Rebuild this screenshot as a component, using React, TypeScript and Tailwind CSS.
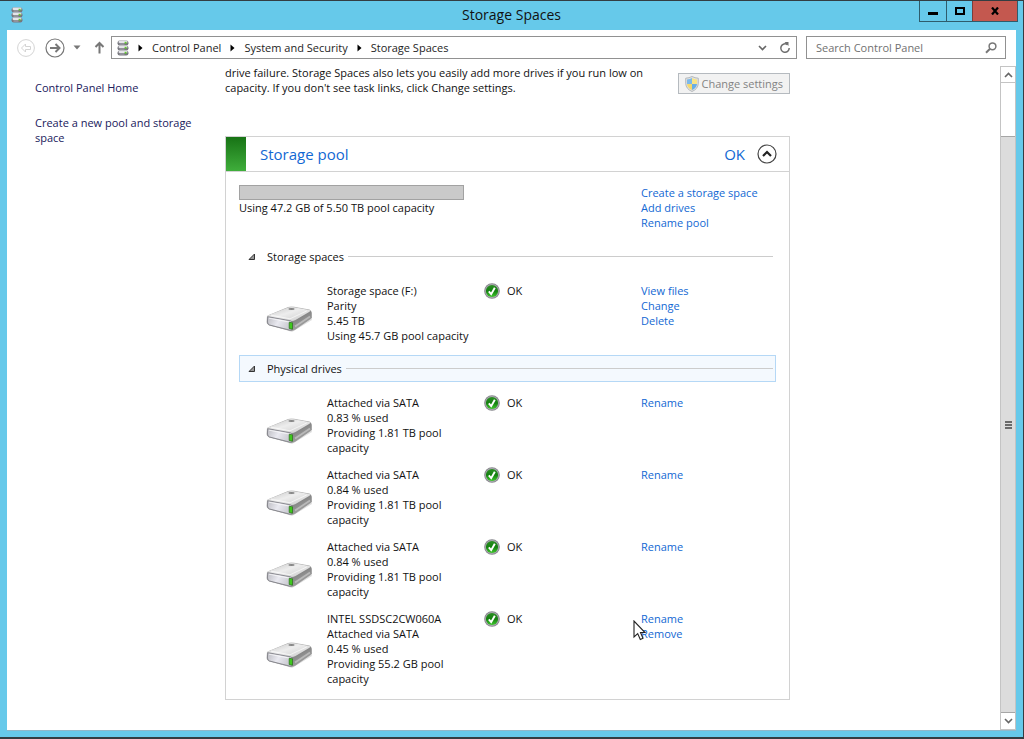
import type { ReactNode } from "react";

type Drive = { lines: string[]; actions: string[] };

const spaces: Drive[] = [
  {
    lines: ["Storage space (F:)", "Parity", "5.45 TB", "Using 45.7 GB pool capacity"],
    actions: ["View files", "Change", "Delete"],
  },
];

const drives: Drive[] = [
  { lines: ["Attached via SATA", "0.83 % used", "Providing 1.81 TB pool", "capacity"], actions: ["Rename"] },
  { lines: ["Attached via SATA", "0.84 % used", "Providing 1.81 TB pool", "capacity"], actions: ["Rename"] },
  { lines: ["Attached via SATA", "0.84 % used", "Providing 1.81 TB pool", "capacity"], actions: ["Rename"] },
  {
    lines: ["INTEL SSDSC2CW060A", "Attached via SATA", "0.45 % used", "Providing 55.2 GB pool", "capacity"],
    actions: ["Rename", "Remove"],
  },
];

function StackIcon() {
  return (
    <svg width="12" height="16" viewBox="0 0 12 16" aria-hidden="true" className="shrink-0">
      {[0, 5, 10].map((y) => (
        <g key={y}>
          <rect x="0.5" y={y + 0.5} width="11" height="5" rx="2.2" fill="#77777e" />
          <rect x="1.5" y={y + 0.6} width="9" height="2.4" rx="1.2" fill="#e4e4e8" />
          <rect x="2.5" y={y + 3.5} width="5" height="1" fill="#b0b0b8" />
          <rect x="7.6" y={y + 1.8} width="2" height="1.8" fill="#63c930" />
        </g>
      ))}
    </svg>
  );
}

function DriveIcon() {
  return (
    <svg width="48" height="38" viewBox="0 0 48 38" aria-hidden="true">
      <defs>
        <linearGradient id="top" x1="0" y1="0" x2="1" y2="1">
          <stop offset="0" stopColor="#c2c2c2" />
          <stop offset="0.45" stopColor="#ededed" />
          <stop offset="1" stopColor="#c8c8c8" />
        </linearGradient>
        <linearGradient id="front" x1="0" y1="0" x2="1" y2="0.3">
          <stop offset="0" stopColor="#bcbcc2" />
          <stop offset="0.5" stopColor="#e9e9f0" />
          <stop offset="1" stopColor="#c9c9d0" />
        </linearGradient>
        <linearGradient id="side" x1="0" y1="0" x2="1" y2="1">
          <stop offset="0" stopColor="#d2d2d2" />
          <stop offset="0.5" stopColor="#7c7c7c" />
          <stop offset="1" stopColor="#b5b5b5" />
        </linearGradient>
      </defs>
      <path d="M4 31 L26 38 L46 26 L45 23Z" fill="#000" opacity="0.12" />
      <path d="M1.5 22 L22 13.500 Q25 12.700 28 13.200 L43.500 16 Q45.500 17 45.500 19 V24 L29 35.500 Q26.500 37 23.500 36.300 L3 31 Q1 30.200 1 28Z" fill="url(#side)" stroke="#909090" strokeWidth="0.6" />
      <path d="M1.800 21.500 L22 13.500 Q25 12.700 28 13.200 L43.500 16 Q45 16.700 43.500 17.800 L29.500 26 Q27 27.400 24.500 26.900 L3 23Q1 22.300 1.800 21.500Z" fill="url(#top)" />
      <path d="M5 21.200 L24 24.800 L41 16.800" stroke="#fff" fill="none" strokeWidth="0.8" opacity="0.8" />
      <path d="M2.500 22.800 L24.500 26.800 Q26.800 27.400 26.700 29.500 L26.500 34.500 Q26.200 36.600 24 36.200 L3.600 31 Q1.500 30.300 1.500 28 V24.200 Q1.500 22.700 2.500 22.800Z" fill="url(#front)" stroke="#85858b" strokeWidth="0.9" />
      <path d="M3 24.200 L23 28" stroke="#fff" strokeWidth="1" opacity="0.7" />
      <path d="M29 32.500 L44 22.500" stroke="#fff" strokeWidth="1.800" opacity="0.35" />
      <path d="M23.200 28.300 L26.500 28.800 V35.200 L23.200 34.500Z" fill="#3fc81e" stroke="#286b19" strokeWidth="0.7" />
      <ellipse cx="25.500" cy="15" rx="3.200" ry="1" fill="#858585" />
    </svg>
  );
}

function OkIcon() {
  return (
    <svg width="16" height="16" viewBox="0 0 16 16" aria-hidden="true" className="shrink-0">
      <defs>
        <linearGradient id="ok" x1="0" y1="0" x2="0" y2="1">
          <stop offset="0" stopColor="#2c8f24" />
          <stop offset="0.5" stopColor="#148010" />
          <stop offset="1" stopColor="#3fc92c" />
        </linearGradient>
      </defs>
      <circle cx="8" cy="8" r="7.800" fill="#848489" />
      <circle cx="8" cy="8" r="7" fill="#a9a9af" />
      <circle cx="8" cy="8" r="6.100" fill="url(#ok)" />
      <path d="M4.800 8.300 L7.200 11.200 L10.800 4.800" fill="none" stroke="#fff" strokeWidth="1.900" />
    </svg>
  );
}

function ShieldIcon() {
  return (
    <svg width="14" height="16" viewBox="0 0 14 16" aria-hidden="true" className="shrink-0">
      <path d="M7 0.500 Q10 2 13.300 2.200 V7.500 Q13 13 7 15.500 Q1 13 0.700 7.500 V2.200 Q4 2 7 0.500Z" fill="#e1e1e1" stroke="#b0b4b8" strokeWidth="0.9" />
      <path d="M7 2 V8 H2 V3.400 Q5 3.200 7 2Z" fill="#7db9ea" />
      <path d="M7 2 V8 H12 V3.400 Q9 3.200 7 2Z" fill="#f9e486" />
      <path d="M7 8 V14 Q2.500 12 2 8Z" fill="#f5d96d" />
      <path d="M7 8 V14 Q11.500 12 12 8Z" fill="#6aaee6" />
    </svg>
  );
}

function Crumb({ children }: { children: ReactNode }) {
  return (
    <>
      <svg width="5" height="8" viewBox="0 0 5 8" aria-hidden="true">
        <path d="M0.500 0.500 L4.500 4 L0.500 7.500Z" fill="#000" />
      </svg>
      <a href="#" className="text-[#1e1e1e]">{children}</a>
    </>
  );
}

function SectionHeader({ title, active = false }: { title: string; active?: boolean }) {
  return (
    <button
      type="button"
      aria-expanded="true"
      className={
        active
          ? "flex h-[27px] w-full items-center border border-[#b5d8f6] bg-[#f4f9fe] pr-0.5 pl-2"
          : "flex h-[27px] w-full items-center border border-transparent pr-0.5 pl-2"
      }
    >
      <svg width="8" height="8" viewBox="0 0 8 8" aria-hidden="true">
        <path d="M6.500 1 V6.500 H1Z" fill="#999" stroke="#333" />
      </svg>
      <span className="ml-[11px]">{title}</span>
      <span className="ml-1 h-px flex-1 bg-[#cccccc]" />
    </button>
  );
}

function DriveRow({ drive }: { drive: Drive }) {
  return (
    <li className="grid grid-cols-[61px_157px_157px_1fr]">
      <div className="flex items-center">
        <DriveIcon />
      </div>
      <div className="whitespace-nowrap">
        {drive.lines.map((line) => (
          <p key={line}>{line}</p>
        ))}
      </div>
      <div className="flex h-[15px] items-center gap-[7px]">
        <OkIcon />
        OK
      </div>
      <div className="flex flex-col items-start text-[#1268d3]">
        {drive.actions.map((action) =>
          action === "Remove" ? (
            <span key={action} className="relative">
              <a href="#">{action}</a>
              <svg width="13" height="21" viewBox="0 0 13 21" aria-hidden="true" className="absolute -top-1.5 -left-2">
                <path d="M1 1 V17 L4.700 13.600 L7.300 19.500 L10 18.300 L7.500 12.500 H12Z" fill="#fff" stroke="#222" strokeWidth="1.100" />
              </svg>
            </span>
          ) : (
            <a key={action} href="#">{action}</a>
          ),
        )}
      </div>
    </li>
  );
}

function Chevron({ down = false }: { down?: boolean }) {
  return (
    <svg width="9" height="6" viewBox="0 0 9 6" aria-hidden="true">
      <path d={down ? "M1 1 L4.500 4.500 L8 1" : "M1 5 L4.500 1.500 L8 5"} fill="none" stroke="#666" strokeWidth="1.600" />
    </svg>
  );
}

export default function App() {
  return (
    <div className="flex min-h-screen flex-col border-t border-r border-b-2 border-[#333d42] bg-[#66c9ea] pr-[7px] pb-[6px] pl-[7px] font-['Open_Sans',sans-serif] text-[11px] leading-[15px] text-[#111111]">
      <header className="grid h-[29px] grid-cols-[1fr_auto_1fr] items-start">
        <div className="pt-[6px] pl-1">
          <StackIcon />
        </div>
        <h1 className="text-[14px] leading-7">Storage Spaces</h1>
        <div className="-mr-0.5 flex h-[21px] justify-self-end border border-t-0 border-[#2e5c6c]">
          <button type="button" aria-label="Minimize" className="flex w-[27px] items-end justify-center border-r border-[#2e5c6c] pb-[6px]">
            <span className="h-[3px] w-[10px] bg-black" />
          </button>
          <button type="button" aria-label="Maximize" className="flex w-[25px] items-center justify-center">
            <span className="h-2 w-[10px] border-2 border-black" />
          </button>
          <button type="button" aria-label="Close" className="flex w-[45px] items-center justify-center border-l border-[#7a3d3b] bg-[#c4584f]">
            <svg width="10" height="8" viewBox="0 0 10 8" aria-hidden="true">
              <path d="M2 0.500 L8 7.500 M8 0.500 L2 7.500" stroke="#000" strokeWidth="2.200" />
            </svg>
          </button>
        </div>
      </header>

      <div className="flex flex-1 flex-col border-b border-[#8fb9cb] bg-white">
        <nav className="flex h-[35px] items-center px-[10px]">
          <button type="button" aria-label="Back" disabled>
            <svg width="18" height="18" viewBox="0 0 18 18" fill="none" stroke="#d4d4d4" aria-hidden="true">
              <circle cx="9" cy="9" r="8.400" />
              <path d="M4.500 9 L8.500 5 V7.500 H13.500 V10.500 H8.500 V13Z" />
            </svg>
          </button>
          <button type="button" aria-label="Forward" className="ml-[10px]">
            <svg width="20" height="20" viewBox="0 0 20 20" fill="none" stroke="#777" aria-hidden="true">
              <circle cx="10" cy="10" r="9" strokeWidth="1.200" />
              <path d="M5 10 H14 M10.500 6 L14.500 10 L10.500 14" strokeWidth="2" />
            </svg>
          </button>
          <button type="button" aria-label="Recent locations" className="ml-2">
            <svg width="8" height="5" viewBox="0 0 8 5" aria-hidden="true">
              <path d="M0.500 0.500 H7.500 L4 4.500Z" fill="#777" />
            </svg>
          </button>
          <button type="button" aria-label="Up" className="ml-[13px]">
            <svg width="11" height="13" viewBox="0 0 11 13" fill="none" stroke="#777" strokeWidth="2" aria-hidden="true">
              <path d="M5.500 12.500 V2 M1.500 6 L5.500 2 L9.500 6" />
            </svg>
          </button>
          <div className="ml-[6px] flex h-[23px] flex-1 items-center border border-[#919191] px-[5px]">
            <StackIcon />
            <div className="ml-[9px] flex flex-1 items-center gap-[9px]">
              <Crumb>Control Panel</Crumb>
              <Crumb>System and Security</Crumb>
              <Crumb>Storage Spaces</Crumb>
            </div>
            <button type="button" aria-label="Previous locations">
              <Chevron down />
            </button>
            <button type="button" aria-label="Refresh" className="ml-3">
              <svg width="12" height="12" viewBox="0 0 12 12" aria-hidden="true">
                <path d="M8.500 2.700 A4.200 4.200 0 1 0 10.200 6" fill="none" stroke="#6e6e6e" strokeWidth="1.500" />
                <path d="M5.500 0 H9.500 V4Z" fill="#6e6e6e" />
              </svg>
            </button>
          </div>
          <label className="ml-[9px] flex h-[23px] w-[200px] items-center border border-[#919191] pr-2 pl-[9px]">
            <input type="text" aria-label="Search Control Panel" placeholder="Search Control Panel" className="min-w-0 flex-1 bg-transparent outline-none placeholder:text-[#717171]" />
            <svg width="12" height="12" viewBox="0 0 12 12" fill="none" stroke="#777777" aria-hidden="true">
              <circle cx="7.500" cy="4.300" r="3.400" strokeWidth="1.500" />
              <path d="M5 6.800 L1 10.800" strokeWidth="2" />
            </svg>
          </label>
        </nav>

        <div className="flex flex-1">
          <aside className="flex w-[218px] shrink-0 flex-col items-start gap-5 px-7 pt-[15px] text-[#20205c]">
            <a href="#">Control Panel Home</a>
            <a href="#">Create a new pool and storage space</a>
          </aside>

          <main className="w-[565px]">
            <div className="flex items-start justify-between">
              <p className="whitespace-nowrap">
                drive failure. Storage Spaces also lets you easily add more drives if you run low on
                <br />
                capacity. If you don't see task links, click Change settings.
              </p>
              <button type="button" disabled className="mt-2 flex h-[21px] items-center gap-0.5 border border-[#b5babf] bg-[#f2f2f2] px-[6px] whitespace-nowrap text-[#838383]">
                <ShieldIcon />
                Change settings
              </button>
            </div>

            <section className="mt-[41px] border border-[#d2d2d2] pb-[13px]">
              <div className="flex h-[35px] items-center border-b border-[#d2d2d2] text-[15px] text-[#1268d3]">
                <span className="h-full w-[20px] bg-linear-to-b from-[#177315] to-[#3fae3b]" />
                <h2 className="ml-[14px] flex-1">Storage pool</h2>
                <span>OK</span>
                <button type="button" aria-label="Collapse storage pool" className="mr-3 ml-3">
                  <svg width="20" height="20" viewBox="0 0 20 20" fill="none" aria-hidden="true">
                    <circle cx="10" cy="10" r="9" stroke="#444" strokeWidth="1.200" />
                    <path d="M6 12 L10 8 L14 12" stroke="#222" strokeWidth="2.200" />
                  </svg>
                </button>
              </div>

              <div className="mx-[13px] mt-[13px]">
                <div className="grid grid-cols-[402px_1fr]">
                  <div>
                    <div role="progressbar" aria-label="Pool capacity used" aria-valuenow={1} className="h-[15px] w-[225px] border border-[#a2a2a2] bg-[#cacaca]" />
                    <p>Using 47.2 GB of 5.50 TB pool capacity</p>
                  </div>
                  <div className="flex flex-col items-start text-[#1268d3]">
                    <a href="#">Create a storage space</a>
                    <a href="#">Add drives</a>
                    <a href="#">Rename pool</a>
                  </div>
                </div>

                <div className="mt-[13px]">
                  <SectionHeader title="Storage spaces" />
                </div>
                <ul className="mt-[13px] pl-[27px]">
                  {spaces.map((space, i) => (
                    <DriveRow key={i} drive={space} />
                  ))}
                </ul>

                <div className="mt-3">
                  <SectionHeader title="Physical drives" active />
                </div>
                <ul className="mt-[13px] flex flex-col gap-3 pl-[27px]">
                  {drives.map((drive, i) => (
                    <DriveRow key={i} drive={drive} />
                  ))}
                </ul>
              </div>
            </section>
          </main>

          <div className="mt-px ml-auto flex w-4 flex-col border border-[#c4c4c4] bg-white">
            <button type="button" aria-label="Scroll up" className="flex h-4 items-center justify-center border-b border-[#c4c4c4]">
              <Chevron />
            </button>
            <div className="h-[53px]" />
            <div className="flex flex-1 flex-col items-center justify-center gap-px border-y border-[#a6a6a6] bg-[#dcdcdc]">
              <span className="h-0.5 w-[7px] bg-[#6a6a6a]" />
              <span className="h-0.5 w-[7px] bg-[#6a6a6a]" />
              <span className="h-0.5 w-[7px] bg-[#6a6a6a]" />
            </div>
            <button type="button" aria-label="Scroll down" className="flex h-4 items-center justify-center">
              <Chevron down />
            </button>
          </div>
        </div>
      </div>
    </div>
  );
}
